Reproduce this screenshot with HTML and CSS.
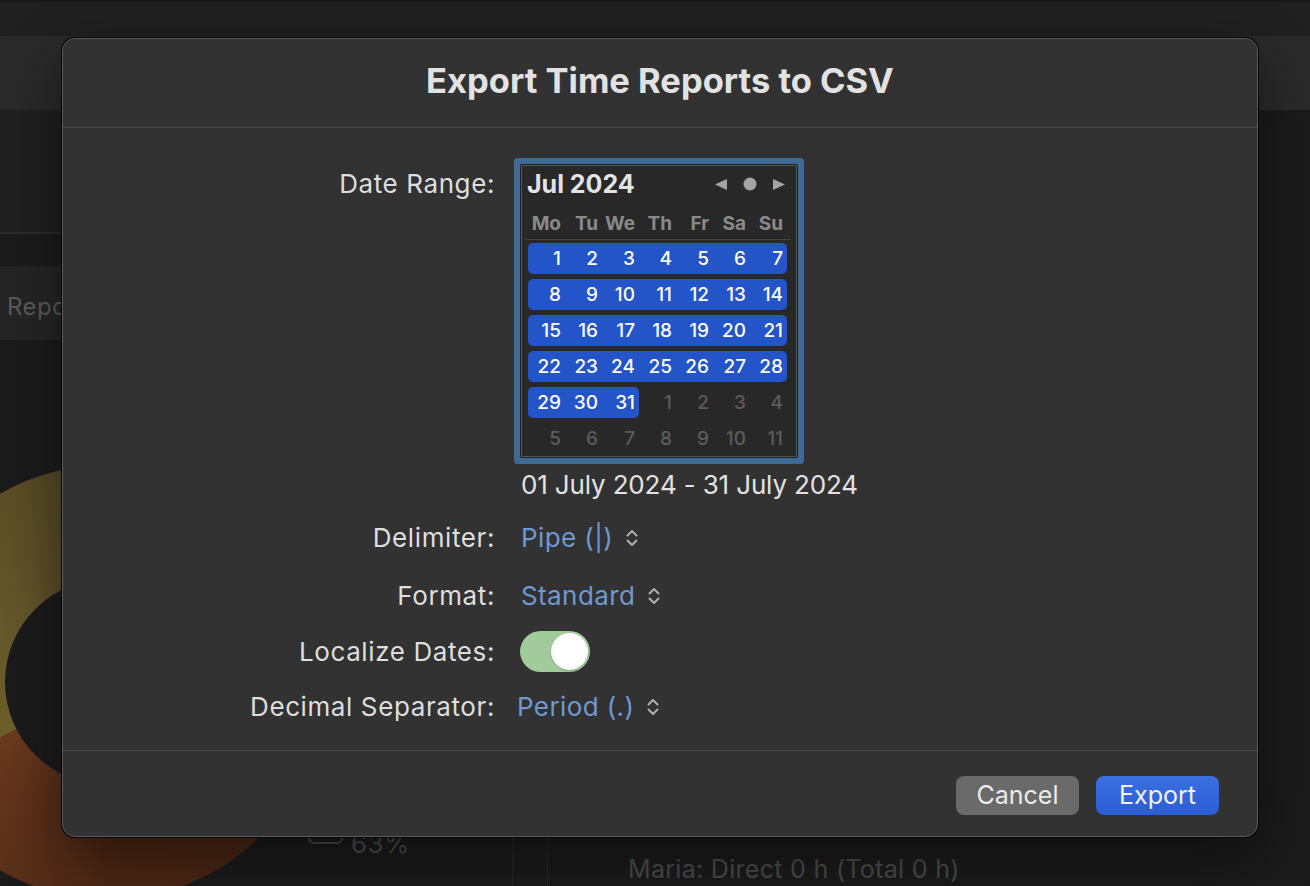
FILE: index.html
```html
<!DOCTYPE html>
<html lang="en">
<head>
<meta charset="utf-8">
<title>Export Time Reports to CSV</title>
<link rel="stylesheet" href="styles.css">
</head>
<body>
<div class="app">
  <div class="titlebar"></div>
  <div class="toolbar"></div>
  <div class="main">
    <aside class="sidebar">
      <div class="side-top"></div>
      <div class="side-tabs"><div class="tab">Reports</div></div>
      <div class="chart">
        <div class="donut"><div class="donut-hole"></div></div>
        <span class="swatch"></span>
        <span class="pct">63%</span>
      </div>
    </aside>
    <div class="gutter"></div>
    <section class="detail">
      <p class="summary">Maria: Direct 0 h (Total 0 h)</p>
    </section>
  </div>
</div>

<div class="modal">
  <header class="modal-header">
    <h1 class="modal-title">Export Time Reports to CSV</h1>
  </header>
  <div class="modal-body">
    <div class="row row-date">
      <div class="label label-top">Date Range:</div>
      <div class="value-col">
        <div class="calendar">
          <div class="cal-head">
            <span class="cal-month">Jul 2024</span>
            <span class="cal-nav">
              <svg class="tri" width="12" height="11" viewBox="0 0 12 11"><polygon points="12,0 12,11 0,5.5" fill="#a3a3a3"/></svg>
              <svg class="dot" width="14" height="14" viewBox="0 0 14 14"><circle cx="7" cy="7" r="6.5" fill="#a3a3a3"/></svg>
              <svg class="tri" width="12" height="11" viewBox="0 0 12 11"><polygon points="0,0 0,11 12,5.5" fill="#a3a3a3"/></svg>
            </span>
          </div>
          <div class="weekdays">
            <span>Mo</span><span>Tu</span><span>We</span><span>Th</span><span>Fr</span><span>Sa</span><span>Su</span>
          </div>
          <div class="weeks">
            <div class="week"><div class="range"><span>1</span><span>2</span><span>3</span><span>4</span><span>5</span><span>6</span><span>7</span></div></div>
            <div class="week"><div class="range"><span>8</span><span>9</span><span>10</span><span>11</span><span>12</span><span>13</span><span>14</span></div></div>
            <div class="week"><div class="range"><span>15</span><span>16</span><span>17</span><span>18</span><span>19</span><span>20</span><span>21</span></div></div>
            <div class="week"><div class="range"><span>22</span><span>23</span><span>24</span><span>25</span><span>26</span><span>27</span><span>28</span></div></div>
            <div class="week"><div class="range"><span>29</span><span>30</span><span>31</span></div><span class="other">1</span><span class="other">2</span><span class="other">3</span><span class="other">4</span></div>
            <div class="week"><span class="other">5</span><span class="other">6</span><span class="other">7</span><span class="other">8</span><span class="other">9</span><span class="other">10</span><span class="other">11</span></div>
          </div>
        </div>
        <div class="date-text">01 July 2024 - 31 July 2024</div>
      </div>
    </div>

    <div class="row row-delim">
      <div class="label">Delimiter:</div>
      <div class="popup">Pipe (|)<svg class="updown" width="14" height="20" viewBox="0 0 14 20"><path d="M2.5 7.5 L7 3 L11.5 7.5 M2.5 12.5 L7 17 L11.5 12.5" fill="none" stroke="#b0b0b0" stroke-width="2" stroke-linecap="round" stroke-linejoin="round"/></svg></div>
    </div>

    <div class="row row-format">
      <div class="label">Format:</div>
      <div class="popup">Standard<svg class="updown" width="14" height="20" viewBox="0 0 14 20"><path d="M2.5 7.5 L7 3 L11.5 7.5 M2.5 12.5 L7 17 L11.5 12.5" fill="none" stroke="#b0b0b0" stroke-width="2" stroke-linecap="round" stroke-linejoin="round"/></svg></div>
    </div>

    <div class="row row-local">
      <div class="label">Localize Dates:</div>
      <div class="switch"><span class="knob"></span></div>
    </div>

    <div class="row row-decimal">
      <div class="label">Decimal Separator:</div>
      <div class="popup popup-shift">Period (.)<svg class="updown" width="14" height="20" viewBox="0 0 14 20"><path d="M2.5 7.5 L7 3 L11.5 7.5 M2.5 12.5 L7 17 L11.5 12.5" fill="none" stroke="#b0b0b0" stroke-width="2" stroke-linecap="round" stroke-linejoin="round"/></svg></div>
    </div>
  </div>
  <footer class="modal-footer">
    <button class="btn btn-cancel" type="button">Cancel</button>
    <button class="btn btn-export" type="button">Export</button>
  </footer>
</div>
</body>
</html>
```

FILE: styles.css
```css
* { box-sizing: border-box; }

html, body {
  margin: 0;
  padding: 0;
}

body {
  width: 1310px;
  height: 886px;
  overflow: hidden;
  background: #1b1b1b;
  font-family: "Inter", "Noto Sans", sans-serif;
  position: relative;
}

/* ---------- background app ---------- */
.app {
  display: flex;
  flex-direction: column;
  height: 886px;
}

.titlebar {
  height: 36px;
  background: #202020;
  border-top: 2px solid #181818;
}

.toolbar {
  height: 74px;
  background: #2a2a2a;
}

.main {
  flex: 1;
  display: flex;
  min-height: 0;
}

.sidebar {
  width: 513px;
  display: flex;
  flex-direction: column;
  border-right: 1px solid #272727;
}

.side-top {
  height: 124px;
  background: #1f1f1f;
  border-bottom: 2px solid #2b2b2b;
}

.side-tabs {
  padding-top: 32px;
}

.tab {
  height: 74px;
  background: #252525;
  color: #5b5b5b;
  font-size: 24px;
  line-height: 74px;
  padding: 4px 0 0 7px;
  letter-spacing: 0.4px;
}

.chart {
  flex: 1;
  position: relative;
  overflow: hidden;
}

.donut {
  position: absolute;
  left: -109px;
  top: 125px;
  width: 434px;
  height: 434px;
  border-radius: 50%;
  background: conic-gradient(from 16deg,
    #3c1f10 0deg,
    #4c2715 164deg,
    #6c3b1f 227deg,
    #6e6029 227deg,
    #62552a 300deg,
    #4a4020 360deg);
}

.donut-hole {
  position: absolute;
  left: 114px;
  top: 114px;
  width: 206px;
  height: 206px;
  border-radius: 50%;
  background: #1b1b1b;
}

.swatch {
  position: absolute;
  left: 308px;
  top: 479px;
  width: 35px;
  height: 25px;
  border: 2px solid #484848;
  border-radius: 6px;
}

.pct {
  position: absolute;
  left: 351px;
  top: 489px;
  font-size: 26px;
  line-height: 30px;
  color: #4a4a4a;
  letter-spacing: 0.4px;
}

.gutter {
  width: 35px;
  border-right: 1px solid #272727;
}

.detail {
  flex: 1;
  display: flex;
  flex-direction: column;
  justify-content: flex-end;
}

.summary {
  margin: 0 0 2px;
  padding-left: 80px;
  font-size: 25px;
  line-height: 30px;
  color: #4a4a4a;
  letter-spacing: 0.3px;
}

/* ---------- modal ---------- */
.modal {
  position: absolute;
  left: 62px;
  top: 38px;
  width: 1196px;
  height: 799px;
  border: 1px solid #5a5a5a;
  border-radius: 13px;
  background: #323232;
  box-shadow: 0 0 0 1px #060606, 0 20px 60px rgba(0, 0, 0, 0.45);
  display: flex;
  flex-direction: column;
  color: #dedede;
}

.modal-header {
  height: 89px;
  border-bottom: 1px solid #474747;
  display: flex;
  align-items: center;
  justify-content: center;
  padding-bottom: 5px;
}

.modal-title {
  margin: 0;
  font-size: 34.5px;
  font-weight: 700;
  color: #e2e2e2;
  letter-spacing: 0;
}

.modal-body {
  flex: 1;
  padding-top: 37px;
}

.row {
  display: grid;
  grid-template-columns: 432px 1fr;
  column-gap: 25px;
  align-items: center;
  height: 40px;
}

.row-date {
  height: auto;
  align-items: start;
}

.row-delim { margin-top: 18px; }
.row-format { margin-top: 18px; }
.row-local { margin-top: 15px; }
.row-decimal { margin-top: 16px; }

.label {
  text-align: right;
  font-size: 26px;
  line-height: 40px;
  color: #dedede;
  letter-spacing: 0.6px;
}

.label-top {
  line-height: 36px;
  margin-top: 1px;
}

.value-col {
  display: flex;
  flex-direction: column;
  align-items: flex-start;
}

/* calendar */
.calendar {
  margin-left: 1px;
  width: 276px;
  height: 292px;
  border: 1px solid #575757;
  border-radius: 1px;
  background: #282828;
  box-shadow: 0 0 0 1px #1f1f1f, 0 0 0 7px #3e6a96;
  padding: 0 9px 0 6px;
}

.cal-head {
  height: 36px;
  display: flex;
  align-items: center;
  justify-content: space-between;
}

.cal-month {
  font-size: 25px;
  font-weight: 700;
  color: #e3e3e3;
  margin-left: -1px;
}

.cal-nav {
  display: flex;
  align-items: center;
  gap: 16px;
  margin-right: 2px;
}

.weekdays {
  display: grid;
  grid-template-columns: repeat(7, 37px);
  margin-top: 7px;
  height: 30px;
  line-height: 30px;
  font-size: 19px;
  font-weight: 700;
  color: #8a8a8a;
  text-align: right;
  position: relative;
}

.weekdays span {
  padding-right: 4px;
}

.weekdays::after {
  content: "";
  position: absolute;
  left: -2px;
  right: -4px;
  bottom: -1px;
  border-bottom: 1px solid #434343;
}

.weeks {
  padding-top: 4px;
  display: flex;
  flex-direction: column;
  gap: 5px;
}

.week {
  display: flex;
  height: 31px;
}

.range {
  display: flex;
  background: #2354c8;
  border-radius: 5px;
}

.week span {
  width: 37px;
  text-align: right;
  padding-right: 4px;
  font-size: 19px;
  font-weight: 500;
  line-height: 32px;
  color: #ffffff;
}

.week span.other {
  color: #5c5c5c;
}

.date-text {
  margin-top: 13px;
  margin-left: 1px;
  font-size: 26px;
  line-height: 30px;
  color: #e2e2e2;
  letter-spacing: -0.15px;
}

/* popups */
.popup {
  display: flex;
  align-items: center;
  font-size: 26px;
  line-height: 40px;
  color: #6e99d1;
  margin-left: 1px;
  letter-spacing: 0.4px;
}

.popup-shift {
  margin-left: -3px;
}

.updown {
  margin-left: 12px;
}

/* switch */
.switch {
  width: 70px;
  height: 41px;
  border-radius: 21px;
  background: #a1cb9b;
  display: flex;
  align-items: center;
  justify-content: flex-end;
  padding-right: 2px;
}

.knob {
  width: 37px;
  height: 37px;
  border-radius: 50%;
  background: #ffffff;
  box-shadow: 0 1px 2px rgba(0, 0, 0, 0.2);
}

/* footer */
.modal-footer {
  height: 86px;
  border-top: 1px solid #474747;
  display: flex;
  justify-content: flex-end;
  align-items: flex-start;
  gap: 17px;
  padding: 25px 38px 0 0;
}

.btn {
  width: 123px;
  height: 39px;
  border: none;
  border-radius: 8px;
  font-family: "Inter", "Noto Sans", sans-serif;
  font-size: 25px;
  line-height: 39px;
  padding: 0;
  color: #ececec;
}

.btn-cancel {
  background: #6a6a6a;
}

.btn-export {
  background: linear-gradient(#3a70e2, #2b5dd2);
  color: #f2f2f2;
}
```
